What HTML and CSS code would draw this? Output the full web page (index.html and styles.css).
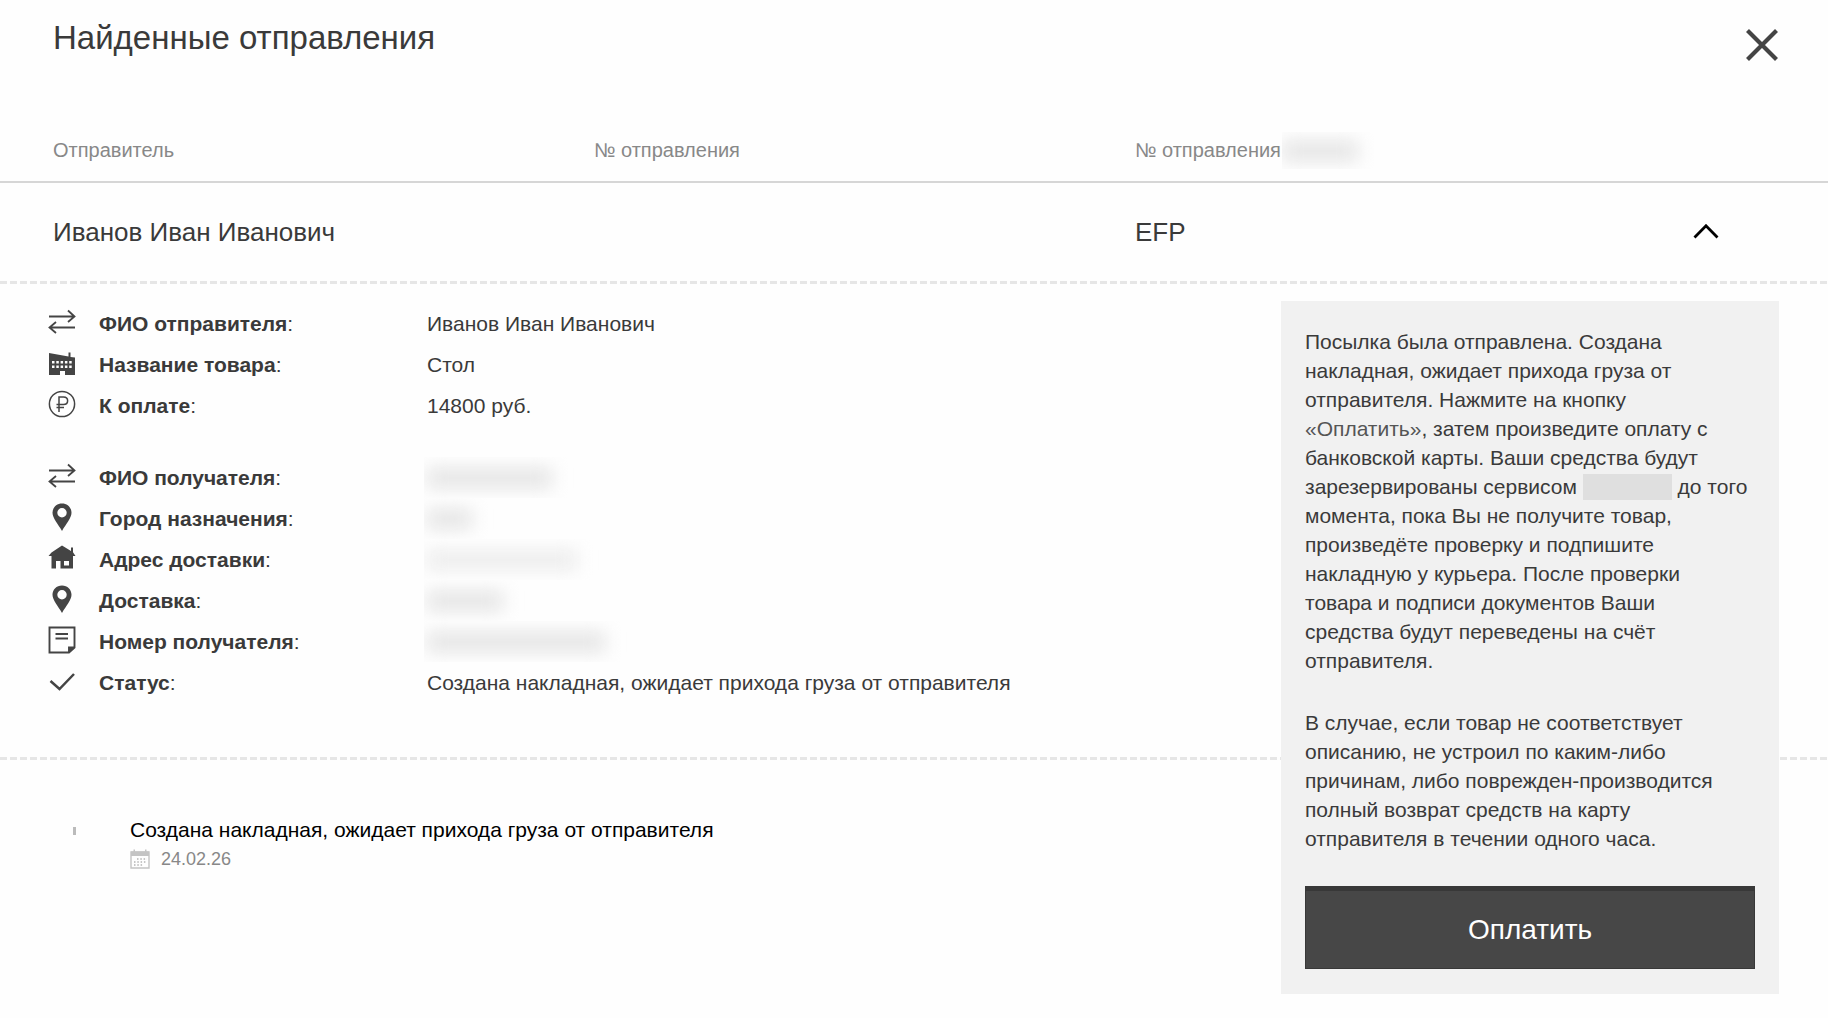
FILE: index.html
```html
<!DOCTYPE html>
<html lang="ru">
<head>
<meta charset="utf-8">
<title>Найденные отправления</title>
<meta name="viewport" content="width=device-width, initial-scale=1">
<link rel="stylesheet" href="styles.css">
</head>
<body>
<svg class="sprite" width="0" height="0" aria-hidden="true">
  <symbol id="i-swap" viewBox="0 0 28 28"><path d="M1 8.500H26M20 2.500L26.500 8.500L20 14M27 19.500H2M8 14L1.500 19.500L8 25" fill="none" stroke="currentColor" stroke-width="1.800"/></symbol>
  <symbol id="i-factory" viewBox="0 0 28 28"><path fill="currentColor" fill-rule="evenodd" d="M1 4L20.500 7.500V3.500H22.500V8L27 8.500V26H17V22H12V26H1ZM4 12V14.500H6.500V12ZM8.300 12V14.500H10.800V12ZM12.600 12V14.500H15.100V12ZM16.900 12V14.500H19.400V12ZM21.200 12V14.500H23.700V12ZM4 16.500V19H6.500V16.500ZM8.300 16.500V19H10.800V16.500ZM12.600 16.500V19H15.100V16.500ZM16.900 16.500V19H19.400V16.500ZM21.200 16.500V19H23.700V16.500Z"/></symbol>
  <symbol id="i-ruble" viewBox="0 0 28 28"><g fill="none" stroke="currentColor" stroke-width="1.500"><circle cx="14" cy="14" r="12.600"/><path d="M11 22V7H15.500C21 7 21 14.500 15.500 14.500H8.500M8.500 17.500H16"/></g></symbol>
  <symbol id="i-pin" viewBox="0 0 28 28"><path fill="currentColor" fill-rule="evenodd" d="M14 0.500C8.500 0.500 4.500 4.600 4.500 9.800C4.500 15 10 21 14 28C18 21 23.500 15 23.500 9.800C23.500 4.600 19.500 0.500 14 0.500ZM14 5A4.700 4.700 0 1 1 14 14.400A4.700 4.700 0 1 1 14 5Z"/></symbol>
  <symbol id="i-home" viewBox="0 0 28 28"><path fill="currentColor" fill-rule="evenodd" d="M14 1.500L23 7V3.500H25V8.300L27.500 12H25V24.500H12.500V17H8V24.500H3.500V12H0.500L3.500 8.500ZM16 17V21.500H21V17Z"/></symbol>
  <symbol id="i-note" viewBox="0 0 28 28"><path d="M1.500 1.500H26.500V21.500L21 26.500H1.500ZM21 26.500V21.500H26.500M7.500 8H20M7.500 12.500H20" fill="none" stroke="currentColor" stroke-width="1.900"/><path d="M21 21.500H27L21 27Z" fill="currentColor"/></symbol>
  <symbol id="i-check" viewBox="0 0 28 28"><path d="M2.500 14L11.500 22L26 7" fill="none" stroke="currentColor" stroke-width="2.500"/></symbol>
</svg>

<main class="dialog">
  <header class="dialog-head">
    <h1 class="title">Найденные отправления</h1>
    <button class="close" type="button" aria-label="Закрыть">
      <svg width="34" height="34" viewBox="0 0 34 34"><path d="M2.500 2.500L31.500 31.500M31.500 2.500L2.500 31.500" fill="none" stroke="currentColor" stroke-width="4.200"/></svg>
    </button>
  </header>

  <table class="results">
    <thead>
      <tr>
        <th scope="col">Отправитель</th>
        <th scope="col">№ отправления</th>
        <th scope="col"><span class="with-mask">№ отправления<span class="mask mask-head"><span class="smudge"></span></span></span></th>
        <td></td>
      </tr>
    </thead>
    <tbody>
      <tr>
        <td>Иванов Иван Иванович</td>
        <td></td>
        <td>EFP</td>
        <td class="toggle-cell">
          <button class="toggle" type="button" aria-label="Свернуть" aria-expanded="true">
            <svg width="26" height="16" viewBox="0 0 26 16"><path d="M1.500 13.500L13 1.800L24.500 13.500" fill="none" stroke="currentColor" stroke-width="2.800"/></svg>
          </button>
        </td>
      </tr>
    </tbody>
  </table>
  <div class="dashes"></div>

  <section class="body">
    <div class="details">
      <dl class="facts">
        <div class="fact"><svg class="icon"><use href="#i-swap"/></svg><dt><b>ФИО отправителя</b>:</dt><dd>Иванов Иван Иванович</dd></div>
        <div class="fact"><svg class="icon"><use href="#i-factory"/></svg><dt><b>Название товара</b>:</dt><dd>Стол</dd></div>
        <div class="fact"><svg class="icon"><use href="#i-ruble"/></svg><dt><b>К оплате</b>:</dt><dd>14800 руб.</dd></div>
      </dl>
      <dl class="facts">
        <div class="fact"><svg class="icon"><use href="#i-swap"/></svg><dt><b>ФИО получателя</b>:</dt><dd class="mask"><span class="smudge w-name"></span></dd></div>
        <div class="fact"><svg class="icon"><use href="#i-pin"/></svg><dt><b>Город назначения</b>:</dt><dd class="mask"><span class="smudge w-city"></span></dd></div>
        <div class="fact"><svg class="icon"><use href="#i-home"/></svg><dt><b>Адрес доставки</b>:</dt><dd class="mask"><span class="smudge w-address"></span></dd></div>
        <div class="fact"><svg class="icon"><use href="#i-pin"/></svg><dt><b>Доставка</b>:</dt><dd class="mask"><span class="smudge w-delivery"></span></dd></div>
        <div class="fact"><svg class="icon"><use href="#i-note"/></svg><dt><b>Номер получателя</b>:</dt><dd class="mask"><span class="smudge w-phone"></span></dd></div>
        <div class="fact"><svg class="icon"><use href="#i-check"/></svg><dt><b>Статус</b>:</dt><dd>Создана накладная, ожидает прихода груза от отправителя</dd></div>
      </dl>
    </div>

    <div class="dashes split"></div>

    <ol class="history">
      <li class="event">
        <span class="tick"></span>
        <div>
          <p class="event-text">Создана накладная, ожидает прихода груза от отправителя</p>
          <p class="event-date">
            <svg width="20" height="20" viewBox="0 0 20 20"><path d="M1 3H19V19H1Z" fill="none" stroke="#c4c4c4" stroke-width="1.400"/><path d="M1 2.500H3.500V0.500H5V2.500H15V0.500H16.500V2.500H19V7H1Z" fill="#c4c4c4"/><path d="M7 10H17M4 13H17M4 16H13" stroke="#b4b4b4" stroke-width="1.300" stroke-dasharray="1.500 1.800"/></svg>
            <time datetime="2026-02-24">24.02.26</time>
          </p>
        </div>
      </li>
    </ol>

    <aside class="pay">
      <p>Посылка была отправлена. Создана накладная, ожидает прихода груза от отправителя. Нажмите на кнопку <span class="soft">«Оплатить»</span>, затем произведите оплату с банковской карты. Ваши средства будут зарезервированы сервисом <span class="redacted"></span> до того момента, пока Вы не получите товар, произведёте проверку и подпишите накладную у курьера. После проверки товара и подписи документов Ваши средства&nbsp;будут переведены на счёт отправителя.</p>
      <p>В случае, если товар не соответствует описанию, не устроил по каким-либо причинам, либо поврежден-производится полный возврат средств на карту отправителя в течении одного часа.</p>
      <button class="pay-button" type="button">Оплатить</button>
    </aside>
  </section>
</main>
</body>
</html>
```
FILE: styles.css
```css
* {
  box-sizing: border-box;
}

body {
  margin: 0;
  background: #fefefe;
  color: #3a3a3a;
  font-family: "Liberation Sans", Arial, sans-serif;
  font-size: 21px;
}

p, h1, dl, dd, ol {
  margin: 0;
  padding: 0;
}

button {
  border: 0;
  padding: 0;
  background: none;
  color: inherit;
  font-family: inherit;
  cursor: pointer;
}

svg {
  display: block;
}

.sprite {
  position: absolute;
}

.dialog-head {
  display: flex;
  justify-content: space-between;
  align-items: flex-start;
  padding: 20px 49px 0 53px;
}

.title {
  font-size: 33px;
  font-weight: 400;
  line-height: 36px;
}

.close {
  padding-top: 8px;
  color: #444;
}

.results {
  width: 100%;
  margin-top: 58px;
  border-collapse: collapse;
  table-layout: fixed;
  text-align: left;
}

.results th,
.results td {
  padding: 0 0 0 53px;
  font-weight: 400;
}

.results thead tr {
  border-bottom: 2px solid #d6d6d6;
}

.results th {
  width: 541px;
  height: 62px;
  color: #888;
  font-size: 20px;
}

.results tbody td {
  height: 99px;
  font-size: 26px;
}

.results .toggle-cell {
  padding: 0 109px 0 0;
}

.toggle {
  display: block;
  margin-left: auto;
  color: #000;
}

.with-mask {
  display: flex;
  align-items: center;
  gap: 1px;
}

.mask {
  overflow: hidden;
}

.mask-head {
  display: flex;
  align-items: center;
  width: 93px;
  height: 37px;
}

.smudge {
  display: block;
  width: 76px;
  height: 20px;
  background: #e4e4e4;
  filter: blur(9px);
}

.dashes {
  height: 3px;
  background: repeating-linear-gradient(90deg, #e6e6e6 0 7px, transparent 7px 10px);
}

.body {
  display: grid;
  grid-template-columns: minmax(0, 1fr) 498px;
  grid-template-rows: auto auto 1fr;
  padding-right: 49px;
}

.details {
  display: grid;
  gap: 31px;
  padding: 19px 0 54px 48px;
}

.fact {
  display: grid;
  grid-template-columns: 28px 305px minmax(0, 1fr);
  column-gap: 23px;
  align-items: center;
  height: 41px;
}

.icon {
  width: 28px;
  height: 28px;
  margin-bottom: 4px;
  color: #444;
}

.fact .mask {
  display: flex;
  align-items: center;
  height: 41px;
  margin-left: -3px;
  padding-left: 3px;
}

.w-name { width: 125px; }
.w-city { width: 45px; }
.w-address { width: 150px; background: #ececec; }
.w-delivery { width: 76px; }
.w-phone { width: 178px; }

.split {
  grid-row: 2;
  grid-column: 1 / 3;
  margin-right: -49px;
}

.history {
  grid-row: 3;
  grid-column: 1;
  padding: 54px 0 0 73px;
  list-style: none;
}

.event {
  display: grid;
  grid-template-columns: 3px minmax(0, 1fr);
  column-gap: 54px;
}

.tick {
  height: 8px;
  margin-top: 13px;
  background: #bbb;
}

.event-text {
  color: #000;
  line-height: 32px;
}

.event-date {
  display: flex;
  align-items: center;
  gap: 11px;
  color: #888;
  font-size: 18px;
  line-height: 26px;
}

.pay {
  display: grid;
  grid-row: 1 / 4;
  grid-column: 2;
  row-gap: 33px;
  margin-top: 17px;
  padding: 26px 24px 25px;
  background: #f1f1f1;
  line-height: 29px;
}

.pay p {
  padding-right: 4px;
}

.soft {
  color: #555;
}

.redacted {
  display: inline-block;
  width: 89px;
  height: 26px;
  background: #dfdfdf;
  vertical-align: -6px;
}

.pay-button {
  height: 83px;
  border: 1px solid #383838;
  border-top-width: 5px;
  background: #474747;
  color: #fff;
  font-size: 28px;
}
```
